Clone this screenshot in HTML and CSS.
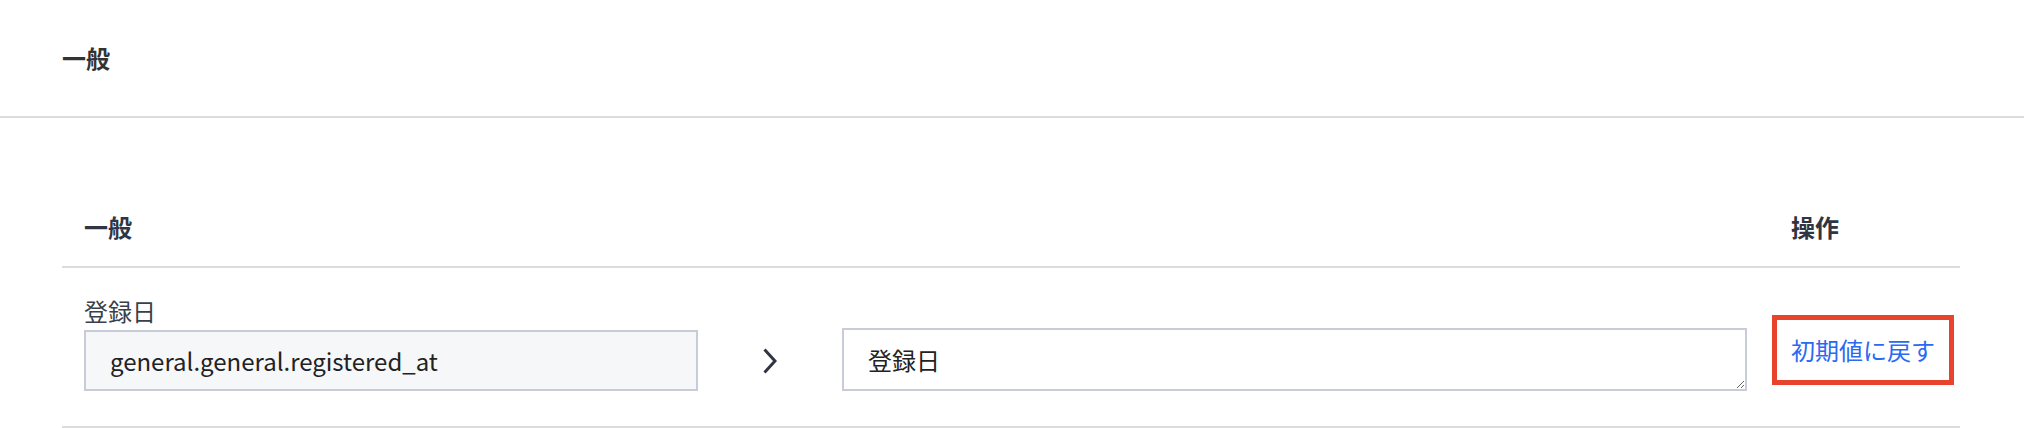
FILE: index.html
```html
<!DOCTYPE html>
<html lang="ja">
<head>
  <meta charset="UTF-8">
  <meta name="viewport" content="width=device-width, initial-scale=1.0">
  <title>一般</title>
  <link rel="stylesheet" href="styles.css">
</head>
<body>
  <div class="page-header">一般</div>

  <div class="container">
    <table class="label-table">
      <colgroup>
        <col class="col-key">
        <col class="col-arrow">
        <col class="col-value">
        <col class="col-action">
      </colgroup>
      <thead>
        <tr>
          <th>一般</th>
          <th></th>
          <th></th>
          <th>操作</th>
        </tr>
      </thead>
      <tbody>
        <tr>
          <td>
            <div class="field-label">登録日</div>
            <input class="key-input" type="text" value="general.general.registered_at" readonly>
          </td>
          <td>
            <div class="arrow">
              <svg width="14" height="26" viewBox="0 0 14 26">
                <path d="M1.5 1.5 L12 13 L1.5 24.5" fill="none" stroke="#2f3542" stroke-width="3"/>
              </svg>
            </div>
          </td>
          <td>
            <textarea class="value-input">登録日</textarea>
          </td>
          <td>
            <button class="reset-btn">初期値に戻す</button>
          </td>
        </tr>
      </tbody>
    </table>
  </div>
</body>
</html>
```

FILE: styles.css
```css
body {
  margin: 0;
  padding: 0;
  font-family: "Noto Sans CJK JP", "Noto Sans", sans-serif;
  color: #333;
  background-color: #fff;
}

.page-header {
  padding: 40px 62px;
  font-size: 24px;
  line-height: 36px;
  font-weight: bold;
  color: #333;
  border-bottom: 2px solid #dcdcdc;
}

.container {
  margin: 70px 64px 0 62px;
}

table {
  width: 100%;
  border-collapse: collapse;
  table-layout: fixed;
}

.col-key {
  width: 658px;
}

.col-arrow {
  width: 100px;
}

.col-action {
  width: 191px;
}

th {
  padding: 21px 22px;
  font-size: 24px;
  line-height: 36px;
  font-weight: bold;
  color: #2f3542;
  text-align: left;
  border-bottom: 2px solid #dcdcdc;
}

td {
  padding: 25px 22px 35px;
  vertical-align: bottom;
  border-bottom: 2px solid #dcdcdc;
}

.field-label {
  font-size: 24px;
  line-height: 36px;
  color: #3a3f4a;
  margin-bottom: 1px;
}

.key-input {
  display: block;
  box-sizing: border-box;
  width: 100%;
  height: 61px;
  margin: 0;
  padding: 0 24px;
  font-family: inherit;
  font-size: 24px;
  color: #222;
  background-color: #f6f7f9;
  border: 2px solid #c8ccd8;
  border-radius: 0;
  outline: none;
}

.arrow {
  height: 61px;
  display: flex;
  align-items: center;
  justify-content: center;
}

.value-input {
  display: block;
  box-sizing: border-box;
  width: 100%;
  height: 63px;
  margin: 0;
  padding: 12px 24px 10px;
  font-family: inherit;
  font-size: 24px;
  line-height: 36px;
  color: #222;
  background-color: #fff;
  border: 2px solid #c8ccd8;
  border-radius: 0;
  outline: none;
  resize: vertical;
}

.reset-btn {
  display: block;
  margin: 0 0 25px;
  padding: 0;
  font-family: inherit;
  font-size: 24px;
  line-height: 32px;
  color: #2b6af0;
  background: none;
  border: none;
  cursor: pointer;
  white-space: nowrap;
  outline: 5px solid #e8432c;
  outline-offset: 14px;
}
```
